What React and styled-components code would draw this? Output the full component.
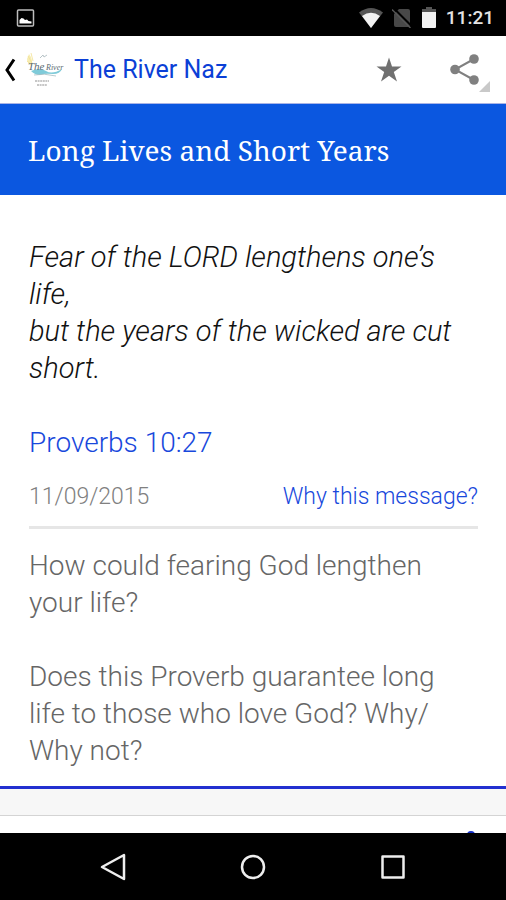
import React, { useState } from 'react';
import styled, { createGlobalStyle } from 'styled-components';

const GlobalStyle = createGlobalStyle`
  * {
    box-sizing: border-box;
  }

  body {
    margin: 0;
    background-color: #ffffff;
    font-family: Roboto, 'Liberation Sans', sans-serif;
  }
`;

const Screen = styled.div`
  display: flex;
  flex-direction: column;
  height: 100vh;
`;

const StatusBar = styled.div`
  display: flex;
  flex-shrink: 0;
  align-items: center;
  justify-content: space-between;
  height: 36px;
  padding: 0 12px 0 16px;
  background-color: #000000;
`;

const StatusIcons = styled.div`
  display: flex;
  align-items: center;
  gap: 9px;
`;

const Clock = styled.time`
  color: #e4e4e4;
  font-size: 19px;
  font-weight: 500;
  line-height: 24px;
`;

const AppBar = styled.header`
  display: flex;
  flex-shrink: 0;
  align-items: center;
  justify-content: space-between;
  height: 68px;
  padding: 0 16px 0 4px;
  border-bottom: 1px solid #a9b4e6;
  background-color: #ffffff;
`;

const HomeLink = styled.a`
  display: flex;
  align-items: center;
  gap: 9px;
  color: #0b3fd6;
  text-decoration: none;
`;

const AppName = styled.span`
  font-size: 25px;
  line-height: 32px;
`;

const Actions = styled.div`
  display: flex;
  align-items: center;
  gap: 44px;
`;

const IconButton = styled.button`
  display: flex;
  padding: 0;
  border: none;
  background: none;
  color: ${(props) => props.$color || '#707070'};
  cursor: pointer;
`;

const Content = styled.main`
  flex: 1;
  min-height: 0;
  overflow-y: auto;
  scrollbar-width: none;
  background-color: #f7f7f7;
`;

const Message = styled.article`
  margin-bottom: 26px;
  border-bottom: 3px solid #2230d0;
  background-color: #ffffff;
`;

const MessageTitle = styled.h1`
  margin: 0;
  padding: 29px 28px 27px;
  background-color: #0b57e0;
  color: #ffffff;
  font-family: 'Noto Serif', 'Droid Serif', 'DejaVu Serif Condensed', 'DejaVu Serif', serif;
  font-size: 28px;
  font-weight: 400;
  line-height: 35px;
`;

const MessageBody = styled.div`
  padding: 44px 28px 17px 29px;
  font-size: 28px;
  font-weight: 300;
  line-height: 37px;
`;

const Verse = styled.blockquote`
  margin: 0 0 37px;
  color: #111111;
  font-size: 29px;
  font-style: italic;
`;

const Reference = styled.a`
  color: #1848dc;
  text-decoration: none;
`;

const MessageMeta = styled.div`
  display: flex;
  align-items: center;
  justify-content: space-between;
  margin-bottom: 18px;
  padding: 19px 0 12px;
  border-bottom: 3px solid #e6e6e6;
  font-size: 23px;
  line-height: 34px;
`;

const MessageDate = styled.time`
  color: #808080;
`;

const WhyLink = styled.a`
  color: #1848dc;
  text-decoration: none;
`;

const Question = styled.p`
  margin: 0 0 37px;
  padding-right: 8px;
  color: #666666;

  &:last-child {
    margin-bottom: 0;
  }
`;

const NextMessage = styled.section`
  display: flex;
  justify-content: flex-end;
  padding: 15px 31px;
  border-top: 1px solid #d4d4d4;
  background-color: #ffffff;
`;

const NavBar = styled.nav`
  display: flex;
  flex-shrink: 0;
  align-items: center;
  justify-content: center;
  gap: 112px;
  height: 67px;
  background-color: #000000;
`;

const PictureIcon = () => (
  <svg width="19" height="18" viewBox="0 0 19 18" aria-hidden="true">
    <rect x="1.5" y="1" width="16" height="16" rx="1" fill="none" stroke="#bdbdbd" strokeWidth="1.5" />
    <path d="M3.5 14.5V11l2-2 2 .5L9 11l2-.5 1.5 1.5 3 .5v2z" fill="#ffffff" />
  </svg>
);

const WifiIcon = () => (
  <svg width="24" height="20" viewBox="0 0 24 20" aria-hidden="true">
    <path d="M0 4.5Q12-4.5 24 4.5L12 20z" fill="#555555" />
    <path d="M3 8Q12 1.5 21 8L12 20z" fill="#f2f2f2" />
  </svg>
);

const NoSimIcon = () => (
  <svg width="20" height="20" viewBox="0 0 20 20" aria-hidden="true">
    <path d="M7 1h9q2 0 2 2v14q0 2-2 2H4q-2 0-2-2V6z" fill="#484848" />
    <path d="M2 .5 19.5 18" stroke="#000000" strokeWidth="2" />
    <path d="M0 1.5 18.5 20" stroke="#555555" strokeWidth="1.5" />
  </svg>
);

const BatteryIcon = () => (
  <svg width="16" height="22" viewBox="0 0 16 22" aria-hidden="true">
    <path d="M5 0h6v2h4v4H1V2h4z" fill="#555555" />
    <path d="M1 5h14v15q0 1-1 1H2q-1 0-1-1z" fill="#f2f2f2" />
  </svg>
);

const BackIcon = () => (
  <svg width="12" height="24" viewBox="0 0 12 24" aria-hidden="true">
    <path d="M10 1.5 3 12l7 10.5" fill="none" stroke="#000000" strokeWidth="3" />
  </svg>
);

const RiverLogo = () => (
  <svg width="40" height="40" viewBox="0 0 40 40" aria-hidden="true">
    <path d="M4 4q4 5 3 12-5-2-5-7z" fill="#f7edb4" />
    <path d="M3 6l4 7M6 3l2 8M2 11l5 4" stroke="#f2e292" strokeWidth="0.8" />
    <path d="m15 8 3-3 1 2 3-2" fill="none" stroke="#b8c4c8" strokeWidth="1" />
    <path d="M6 21q9-4 15 0t16-2q-2 5-9 5-9-1-13 1-5 0-9-4z" fill="#7fcbd9" />
    <g fill="#5b6b72" fontFamily="'Liberation Serif', serif" fontStyle="italic">
      <text x="3" y="20" fontSize="11">The</text>
      <text x="21" y="20" fontSize="8">River</text>
    </g>
    <path d="M9 25q10-2 22 1" fill="none" stroke="#a5bcc2" strokeWidth="0.8" />
    <path d="M10 31h14M12 35h10" stroke="#b5b5b5" strokeWidth="1.6" strokeDasharray="2 0.6" />
  </svg>
);

const StarIcon = () => (
  <svg width="26" height="26" viewBox="0 0 26 26" aria-hidden="true">
    <path
      d="m13 .5 3 9h9.5l-7.7 5.6L21 24.5l-8-5.7-8 5.7 3.2-9.4L.5 9.5H10z"
      fill="currentColor"
    />
  </svg>
);

const ShareIcon = () => (
  <svg width="44" height="46" viewBox="0 0 44 46" aria-hidden="true">
    <path d="M28 12 9 22.5 28 33" fill="none" stroke="currentColor" strokeWidth="2" />
    <circle cx="28" cy="12" r="4.8" fill="currentColor" />
    <circle cx="9" cy="22.5" r="4.8" fill="currentColor" />
    <circle cx="28" cy="33" r="4.8" fill="currentColor" />
    <path d="M44 34v11H33z" fill="#c9c9c9" />
  </svg>
);

const MoreIcon = () => (
  <svg width="8" height="32" viewBox="0 0 8 32" aria-hidden="true">
    <circle cx="4" cy="4" r="4" fill="currentColor" />
    <circle cx="4" cy="16" r="4" fill="currentColor" />
    <circle cx="4" cy="28" r="4" fill="currentColor" />
  </svg>
);

const NavIcon = ({ children }) => (
  <svg
    width="28"
    height="28"
    viewBox="0 0 28 28"
    fill="none"
    stroke="#eeeeee"
    strokeWidth="2.5"
    strokeLinejoin="round"
    aria-hidden="true"
  >
    {children}
  </svg>
);

const App = () => {
  const [starred, setStarred] = useState(false);

  return (
    <Screen>
      <GlobalStyle />
      <StatusBar>
        <PictureIcon />
        <StatusIcons>
          <WifiIcon />
          <NoSimIcon />
          <BatteryIcon />
          <Clock>11:21</Clock>
        </StatusIcons>
      </StatusBar>

      <AppBar>
        <HomeLink href="#home">
          <BackIcon />
          <RiverLogo />
          <AppName>The River Naz</AppName>
        </HomeLink>
        <Actions>
          <IconButton
            type="button"
            aria-label="Favorite"
            aria-pressed={starred}
            $color={starred ? '#0b57e0' : '#707070'}
            onClick={() => setStarred(!starred)}
          >
            <StarIcon />
          </IconButton>
          <IconButton type="button" aria-label="Share" $color="#808080">
            <ShareIcon />
          </IconButton>
        </Actions>
      </AppBar>

      <Content>
        <Message>
          <MessageTitle>Long Lives and Short Years</MessageTitle>
          <MessageBody>
            <Verse>
              Fear of the LORD lengthens one’s life,
              <br />
              but the years of the wicked are cut short.
            </Verse>
            <Reference href="#proverbs">Proverbs 10:27</Reference>
            <MessageMeta>
              <MessageDate>11/09/2015</MessageDate>
              <WhyLink href="#why">Why this message?</WhyLink>
            </MessageMeta>
            <Question>How could fearing God lengthen your life?</Question>
            <Question>
              Does this Proverb guarantee long life to those who love God? Why/
              <wbr />
              Why not?
            </Question>
          </MessageBody>
        </Message>
        <NextMessage>
          <IconButton type="button" aria-label="More options" $color="#1530c8">
            <MoreIcon />
          </IconButton>
        </NextMessage>
      </Content>

      <NavBar>
        <IconButton type="button" aria-label="Back">
          <NavIcon>
            <path d="M25 2v24L3 14z" />
          </NavIcon>
        </IconButton>
        <IconButton type="button" aria-label="Home">
          <NavIcon>
            <circle cx="14" cy="14" r="11" />
          </NavIcon>
        </IconButton>
        <IconButton type="button" aria-label="Recent apps">
          <NavIcon>
            <rect x="3.5" y="3.5" width="21" height="21" />
          </NavIcon>
        </IconButton>
      </NavBar>
    </Screen>
  );
};

export default App;
